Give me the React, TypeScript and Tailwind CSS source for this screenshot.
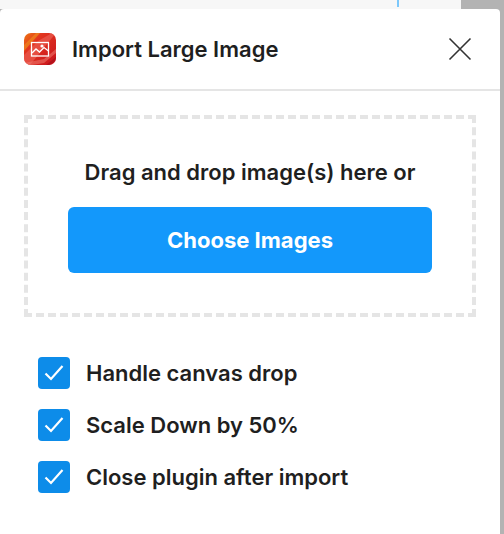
export default function App() {
  const items = ["Handle canvas drop", "Scale Down by 50%", "Close plugin after import"];
  return (
    <div className="h-[534px] w-[504px] overflow-hidden bg-[#b3b3b3] font-['Inter',sans-serif] text-[#1f1f1f]">
      <div className="h-[9px] w-[461px] bg-[#f7f7f7] relative">
        <div className="absolute left-[397px] top-0 h-[7px] w-[2px] bg-[#7cc8fb]" />
      </div>
      <div className="h-[525px] w-[500px] rounded-t-[4px] bg-white">
        <div className="flex h-[82px] items-center border-b-2 border-[#e5e5e5] pl-6 pr-[28px]">
          <svg width="32" height="32" viewBox="0 0 32 32" className="shrink-0">
            <defs>
              <linearGradient id="g" x1="0" y1="0" x2="1" y2="1">
                <stop offset="0" stopColor="#ee7a12" />
                <stop offset="0.3" stopColor="#e2351f" />
                <stop offset="1" stopColor="#c8141e" />
              </linearGradient>
              <clipPath id="c">
                <rect width="32" height="32" rx="7" />
              </clipPath>
            </defs>
            <g clipPath="url(#c)">
              <rect width="32" height="32" fill="url(#g)" />
              <path d="M0 22L14 8L28 0H32L6 32H0Z" fill="#ea5a4e" opacity="0.75" />
              <path d="M0 30L20 26L32 16V20L20 30L8 32H0Z" fill="#ef7a70" opacity="0.55" />
              <path d="M0 12L12 0H16L0 18Z" fill="#f08a1c" opacity="0.7" />
              <path d="M22 32L32 24V27L26 32Z" fill="#a80f1a" opacity="0.7" />
            </g>
            <rect x="7.5" y="9.5" width="17" height="13.5" fill="none" stroke="#fff" strokeWidth="1.3" />
            <path d="M8 20L12 16L15.5 19L20 14.5L24.5 18" fill="none" stroke="#fff" strokeWidth="1.3" />
            <circle cx="18" cy="13" r="1.6" fill="#fff" />
          </svg>
          <h1 className="ml-4 flex-1 text-[22px] font-semibold">Import Large Image</h1>
          <svg width="24" height="24" viewBox="0 0 24 24" className="shrink-0">
            <path d="M1.5 1.5L22.5 22.5M22.5 1.5L1.5 22.5" stroke="#333" strokeWidth="1.6" fill="none" />
          </svg>
        </div>
        <div className="mx-6 mt-6 flex h-[202px] w-[452px] flex-col items-center border-4 border-dashed border-[#e5e5e5] px-10">
          <p className="mt-[39px] whitespace-nowrap text-[22px] font-semibold leading-[28px]">Drag and drop image(s) here or</p>
          <button className="mt-[21px] h-[66px] w-[364px] shrink-0 rounded-[6px] bg-[#1398fb] text-[22px] font-bold text-white">Choose Images</button>
        </div>
        <div className="mt-[40px] flex flex-col gap-5 pl-[38px]">
          {items.map((t) => (
            <div key={t} className="flex h-8 items-center gap-4">
              <div className="flex size-8 items-center justify-center rounded-[4px] bg-[#0d8ce9]">
                <svg width="20" height="20" viewBox="0 0 20 20">
                  <path d="M1.5 10.5L7 16L18.5 3" stroke="#fff" strokeWidth="2.2" fill="none" />
                </svg>
              </div>
              <span className="text-[22px] font-semibold">{t}</span>
            </div>
          ))}
        </div>
      </div>
    </div>
  );
}
